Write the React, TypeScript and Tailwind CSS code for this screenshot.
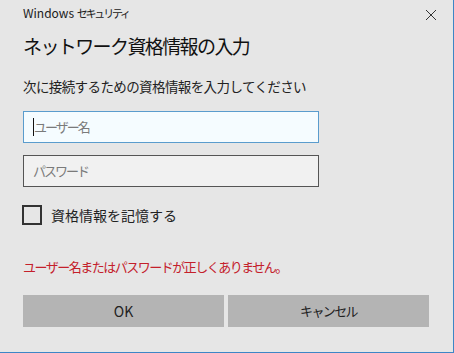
export default function App() {
  const jp = { fontFamily: '"Noto Sans CJK JP", "Noto Sans", sans-serif' };
  return (
    <div className="w-[454px] h-[353px] bg-[#e6e6e6] border-r border-b border-[#3d86c6] text-[#1a1a1a] relative overflow-hidden" style={jp}>
      <div className="flex items-start pl-[23px] pr-[16px] pt-[5px] h-[30px]">
        <div className="text-[12px] leading-[16px] text-[#202020] flex-1">
          Windows <span className="text-[11px] tracking-[-2.2px]">セキュリティ</span>
        </div>
        <svg width="12" height="12" viewBox="0 0 12 12" className="mt-[4px]">
          <path d="M1 1 L11 11 M11 1 L1 11" stroke="#333" strokeWidth="1" />
        </svg>
      </div>
      <div className="pl-[23px] text-[19px] leading-[28px] mt-[2px] text-[#111] tracking-[-1.6px]">ネットワーク資格情報の入力</div>
      <div className="pl-[23px] text-[13.5px] leading-[20px] mt-[16px] text-[#222] tracking-[-0.6px]">次に接続するための資格情報を入力してください</div>
      <div className="pl-[23px] mt-[15px] flex flex-col gap-[12px]">
        <div className="w-[296px] h-[32px] border border-[#5a9ccd] bg-[#f5fcff] flex items-center pl-[9px]">
          <div className="w-px h-[18px] bg-[#111]" />
          <span className="text-[13px] text-[#7a7a7a] tracking-[-2px]">ユーザー名</span>
        </div>
        <div className="w-[296px] h-[32px] border border-[#555] bg-[#f1f1f1] flex items-center pl-[9px]">
          <span className="text-[13px] text-[#7a7a7a] tracking-[-2px]">パスワード</span>
        </div>
      </div>
      <div className="pl-[22px] mt-[18px] flex items-center gap-[9px]">
        <div className="w-[20px] h-[20px] border-2 border-[#333]" />
        <span className="text-[14px] leading-[20px] text-[#222]">資格情報を記憶する</span>
      </div>
      <div className="pl-[23px] mt-[32px] text-[13px] leading-[20px] text-[#c4202b] tracking-[-1.5px]">ユーザー名またはパスワードが正しくありません。</div>
      <div className="pl-[23px] mt-[18px] flex gap-[4px]">
        <div className="w-[201px] h-[32px] bg-[#b4b4b4] flex items-center justify-center text-[14px] text-[#222]">OK</div>
        <div className="w-[201px] h-[32px] bg-[#b4b4b4] flex items-center justify-center text-[13px] text-[#222] tracking-[-1.6px]">キャンセル</div>
      </div>
    </div>
  );
}
